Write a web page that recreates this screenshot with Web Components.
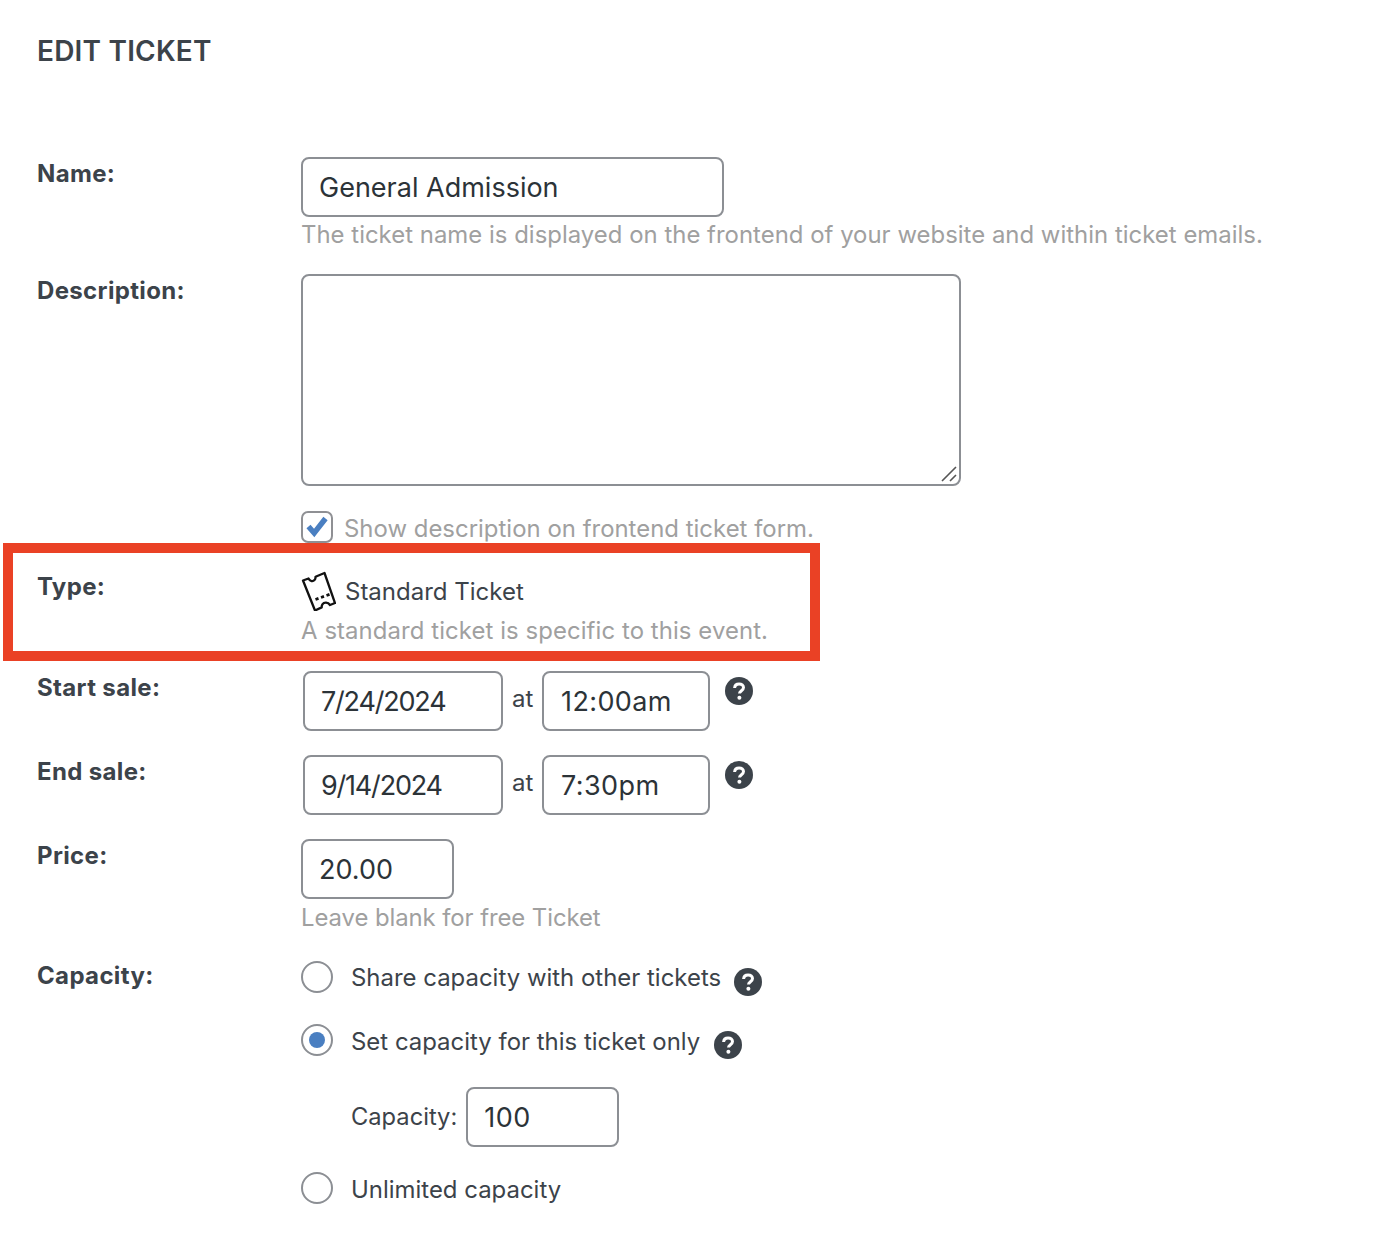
<!DOCTYPE html>
<html lang="en">
<head>
<meta charset="utf-8">
<title>Edit Ticket</title>
<style>
  html, body { margin: 0; background: #fff; }
  body { font-family: Inter, "Liberation Sans", sans-serif; color: #3c434a; }
</style>
</head>
<body>
<edit-ticket>
  <form-row label="Name:" style="margin-top:0">
    <text-box value="General Admission" width="423"></text-box>
    <field-hint style="margin-top:3px; letter-spacing:.025px">The ticket name is displayed on the frontend of your website and within ticket emails.</field-hint>
  </form-row>
  <form-row label="Description:" style="margin-top:25px">
    <text-area></text-area>
    <check-line style="margin-top:25px; letter-spacing:.025px">Show description on frontend ticket form.</check-line>
  </form-row>
  <form-row label="Type:" style="margin-top:29px; --label-top:-1px">
    <type-line>Standard Ticket</type-line>
    <field-hint style="margin-top:5px; letter-spacing:.09px">A standard ticket is specific to this event.</field-hint>
  </form-row>
  <form-row label="Start sale:" style="margin-top:26px">
    <date-time date="7/24/2024" time="12:00am"></date-time>
  </form-row>
  <form-row label="End sale:" style="margin-top:24px">
    <date-time date="9/14/2024" time="7:30pm"></date-time>
  </form-row>
  <form-row label="Price:" style="margin-top:24px">
    <text-box value="20.00" width="153"></text-box>
    <field-hint style="margin-top:4px; letter-spacing:-.07px">Leave blank for free Ticket</field-hint>
  </form-row>
  <form-row label="Capacity:" style="margin-top:29px; --label-top:-1px">
    <radio-line help>Share capacity with other tickets</radio-line>
    <radio-line help checked style="margin-top:31px; --help-shift:1px; --text-top:1px">Set capacity for this ticket only</radio-line>
    <capacity-line value="100" style="margin-top:31px"></capacity-line>
    <radio-line style="margin-top:25px; --text-top:1px">Unlimited capacity</radio-line>
  </form-row>
</edit-ticket>

<script>
class EditTicket extends HTMLElement {
  constructor() {
    super();
    this.attachShadow({ mode: "open" }).innerHTML = `
      <style>
        :host { display: block; position: relative; height: 1253px; box-sizing: border-box; padding-top: 157px; }
        h2 { position: absolute; left: 37px; top: 34px; margin: 0; font-size: 28px; line-height: 34px; font-weight: 600; letter-spacing: .2px; color: #3c434a; }
        .highlight { position: absolute; left: 3px; top: 543px; width: 817px; height: 118px; box-sizing: border-box; border: 10px solid #ea4125; pointer-events: none; }
      </style>
      <h2>EDIT TICKET</h2>
      <slot></slot>
      <div class="highlight"></div>`;
  }
}

class FormRow extends HTMLElement {
  constructor() {
    super();
    this.attachShadow({ mode: "open" }).innerHTML = `
      <style>
        :host { display: grid; grid-template-columns: 264px 1fr; padding-left: 37px; }
        .label { margin-top: var(--label-top, 1px); font-size: 24px; line-height: 32px; font-weight: 700; letter-spacing: .35px; color: #3c434a; }
      </style>
      <div class="label"></div>
      <div><slot></slot></div>`;
    this.shadowRoot.querySelector(".label").textContent = this.getAttribute("label");
  }
}

class TextBox extends HTMLElement {
  constructor() {
    super();
    this.attachShadow({ mode: "open" }).innerHTML = `
      <style>
        :host { display: block; box-sizing: border-box; height: 60px; border: 2px solid #8c8f94; border-radius: 8px; background: #fff;
                padding: 0 16px; font-size: 27px; line-height: 58px; color: #2c3338; white-space: nowrap; }
      </style><span></span>`;
    this.shadowRoot.querySelector("span").textContent = this.getAttribute("value");
    this.style.width = this.getAttribute("width") + "px";
    if (this.hasAttribute("spacing")) this.style.letterSpacing = this.getAttribute("spacing");
  }
}

class FieldHint extends HTMLElement {
  constructor() {
    super();
    this.attachShadow({ mode: "open" }).innerHTML = `
      <style>
        :host { display: block; font-size: 23.9px; line-height: 29px; color: #a0a0a0; white-space: nowrap; }
      </style><slot></slot>`;
  }
}

class TextArea extends HTMLElement {
  constructor() {
    super();
    this.attachShadow({ mode: "open" }).innerHTML = `
      <style>
        :host { display: block; position: relative; box-sizing: border-box; width: 660px; height: 212px; border: 2px solid #8c8f94; border-radius: 8px; background: #fff; }
        svg { position: absolute; right: 0; bottom: 0; }
      </style>
      <svg width="20" height="20" viewBox="0 0 20 20" fill="none" stroke="#555" stroke-width="1.6">
        <path d="M3 17 17 3M11 17 17 11"/>
      </svg>`;
  }
}

class CheckLine extends HTMLElement {
  constructor() {
    super();
    this.attachShadow({ mode: "open" }).innerHTML = `
      <style>
        :host { display: flex; align-items: center; gap: 11px; height: 32px; font-size: 23.9px; color: #a0a0a0; white-space: nowrap; }
        .box { box-sizing: border-box; width: 32px; height: 32px; border: 2px solid #8f9094; border-radius: 7px; background: #fff; }
        svg { display: block; }
        span { position: relative; top: 1px; }
      </style>
      <div class="box">
        <svg width="28" height="28" viewBox="0 0 28 28"><path d="M5.500 13.500 11.200 20 22.500 5.500" fill="none" stroke="#4a7fc1" stroke-width="5.400"/></svg>
      </div>
      <span><slot></slot></span>`;
  }
}

class TypeLine extends HTMLElement {
  constructor() {
    super();
    this.attachShadow({ mode: "open" }).innerHTML = `
      <style>
        :host { display: flex; align-items: center; gap: 9px; height: 40px; margin-top: -1px; font-size: 24px; color: #3c434a; white-space: nowrap; }
        svg { display: block; flex: none; }
      </style>
      <svg width="35" height="40" viewBox="0 0 35 40" fill="none" stroke="#111" stroke-width="2.300" stroke-linejoin="round">
        <path d="M2 9.500 7.500 7.500c1.500 3 4.500 3.300 6 1.600 1.200-1.400 1-3.400 1-3.400L23.500 2 34 32l-5 2c-2-3-6-3-7.600-.6-.8 1.200-.7 3-.7 3L14 39.500z"/>
        <path d="M14.500 28.500l3-1.100M20 26.500l3-1.100M25.500 24.500l3-1.100" stroke-width="2.800"/>
      </svg>
      <span><slot></slot></span>`;
  }
}

class HelpTip extends HTMLElement {
  constructor() {
    super();
    this.attachShadow({ mode: "open" }).innerHTML = `
      <style>
        :host { display: block; flex: none; width: 28px; height: 28px; }
        svg { display: block; }
      </style>
      <svg width="28" height="28" viewBox="0 0 28 28">
        <circle cx="14" cy="14" r="14" fill="#3c434a"/>
        <path d="M9.600 11c.2-2.800 2-4.100 4.500-4.100 2.600 0 4.400 1.500 4.400 3.600 0 3.200-4 3.200-4 6.100" fill="none" stroke="#fff" stroke-width="3"/>
        <circle cx="14.400" cy="20.800" r="2" fill="#fff"/>
      </svg>`;
  }
}

class DateTime extends HTMLElement {
  constructor() {
    super();
    const date = this.getAttribute("date");
    const time = this.getAttribute("time");
    this.attachShadow({ mode: "open" }).innerHTML = `
      <style>
        :host { display: flex; align-items: flex-start; padding-left: 2px; font-size: 24px; color: #3c434a; }
        .at { width: 39px; box-sizing: border-box; padding-left: 9px; line-height: 56px; }
        help-tip { margin: 6px 0 0 15px; }
      </style>
      <text-box value="${date}" width="200" spacing="-1.2px"></text-box>
      <span class="at">at</span>
      <text-box value="${time}" width="168" spacing=".4px" style="padding-left:17px"></text-box>
      <help-tip></help-tip>`;
  }
}

class RadioLine extends HTMLElement {
  constructor() {
    super();
    const mark = this.hasAttribute("checked") ? '<div class="dot"></div>' : "";
    const help = this.hasAttribute("help") ? "<help-tip></help-tip>" : "";
    this.attachShadow({ mode: "open" }).innerHTML = `
      <style>
        :host { display: flex; align-items: center; height: 32px; font-size: 23.95px; color: #3c434a; white-space: nowrap; }
        .radio { box-sizing: border-box; width: 32px; height: 32px; margin-right: 18px; border: 2px solid #8c8f94; border-radius: 50%; background: #fff; display: flex; align-items: center; justify-content: center; }
        .dot { width: 16px; height: 16px; border-radius: 50%; background: #4a7fc1; }
        span { position: relative; top: var(--text-top, 0px); }
        help-tip { margin: 5px 0 0 calc(13px + var(--help-shift, 0px)); position: relative; top: 2px; }
      </style>
      <div class="radio">${mark}</div>
      <span><slot></slot></span>${help}`;
  }
}

class CapacityLine extends HTMLElement {
  constructor() {
    super();
    const value = this.getAttribute("value");
    this.attachShadow({ mode: "open" }).innerHTML = `
      <style>
        :host { display: flex; align-items: center; gap: 9px; padding-left: 50px; font-size: 23.7px; color: #3c434a; }
        span { position: relative; top: -1px; }
      </style>
      <span>Capacity:</span>
      <text-box value="${value}" width="153" spacing=".5px"></text-box>`;
  }
}

customElements.define("edit-ticket", EditTicket);
customElements.define("form-row", FormRow);
customElements.define("text-box", TextBox);
customElements.define("field-hint", FieldHint);
customElements.define("text-area", TextArea);
customElements.define("check-line", CheckLine);
customElements.define("type-line", TypeLine);
customElements.define("help-tip", HelpTip);
customElements.define("date-time", DateTime);
customElements.define("radio-line", RadioLine);
customElements.define("capacity-line", CapacityLine);
</script>
</body>
</html>
